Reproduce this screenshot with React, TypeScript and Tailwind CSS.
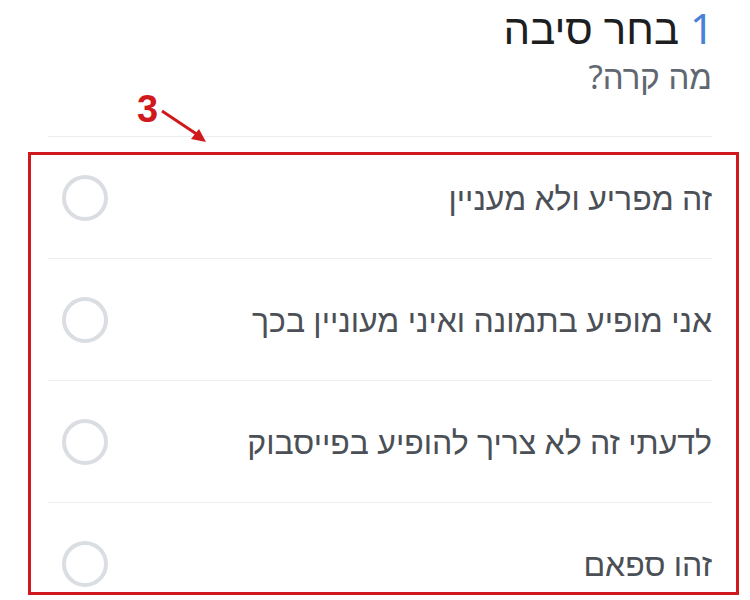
const reasons = [
  "זה מפריע ולא מעניין",
  "אני מופיע בתמונה ואיני מעוניין בכך",
  "לדעתי זה לא צריך להופיע בפייסבוק",
  "זהו ספאם",
];

// Step header + radio list of reasons; the red frame and "3" are a screenshot annotation.
export default function App() {
  return (
    <div
      dir="rtl"
      className="relative h-[600px] w-[750px] overflow-hidden bg-white font-['Noto_Sans','Liberation_Sans',sans-serif]"
    >
      <div className="pr-[38px] pl-[48px] pt-[2px]">
        <h1 className="-mr-[2px] text-[42px] leading-[52px] text-[#1c1e21]">
          <span className="text-[#4a80d6]">1</span> בחר סיבה
        </h1>
        <p className="mt-[4px] text-[33px] leading-[38px] text-[#606770]">מה קרה?</p>

        <ul className="mt-[40px] border-t border-[#ebedf0]">
          {reasons.map((r, i) => (
            <li
              key={r}
              className={
                "flex h-[122px] items-center justify-between " +
                (i < reasons.length - 1 ? "border-b border-[#ebedf0]" : "")
              }
            >
              <span className="text-[32px] text-[#4b4f56]">{r}</span>
              <span className="ml-[14px] h-[46px] w-[46px] rounded-full border-[4px] border-[#dadde1]" />
            </li>
          ))}
        </ul>
      </div>

      {/* annotation */}
      <div className="pointer-events-none absolute left-[28px] top-[152px] h-[443px] w-[711px] border-[3px] border-[#d0191c]" />
      <div className="absolute left-[137px] top-[90px] font-['Liberation_Sans',sans-serif] text-[38px] font-bold leading-none text-[#d0191c]">
        3
      </div>
      <svg className="absolute left-[158px] top-[105px]" width="54" height="42" viewBox="0 0 54 42">
        <line x1="4" y1="6" x2="40" y2="30" stroke="#d0191c" strokeWidth="3" />
        <polygon points="48,37 33,34 41,24" fill="#d0191c" />
      </svg>
    </div>
  );
}
